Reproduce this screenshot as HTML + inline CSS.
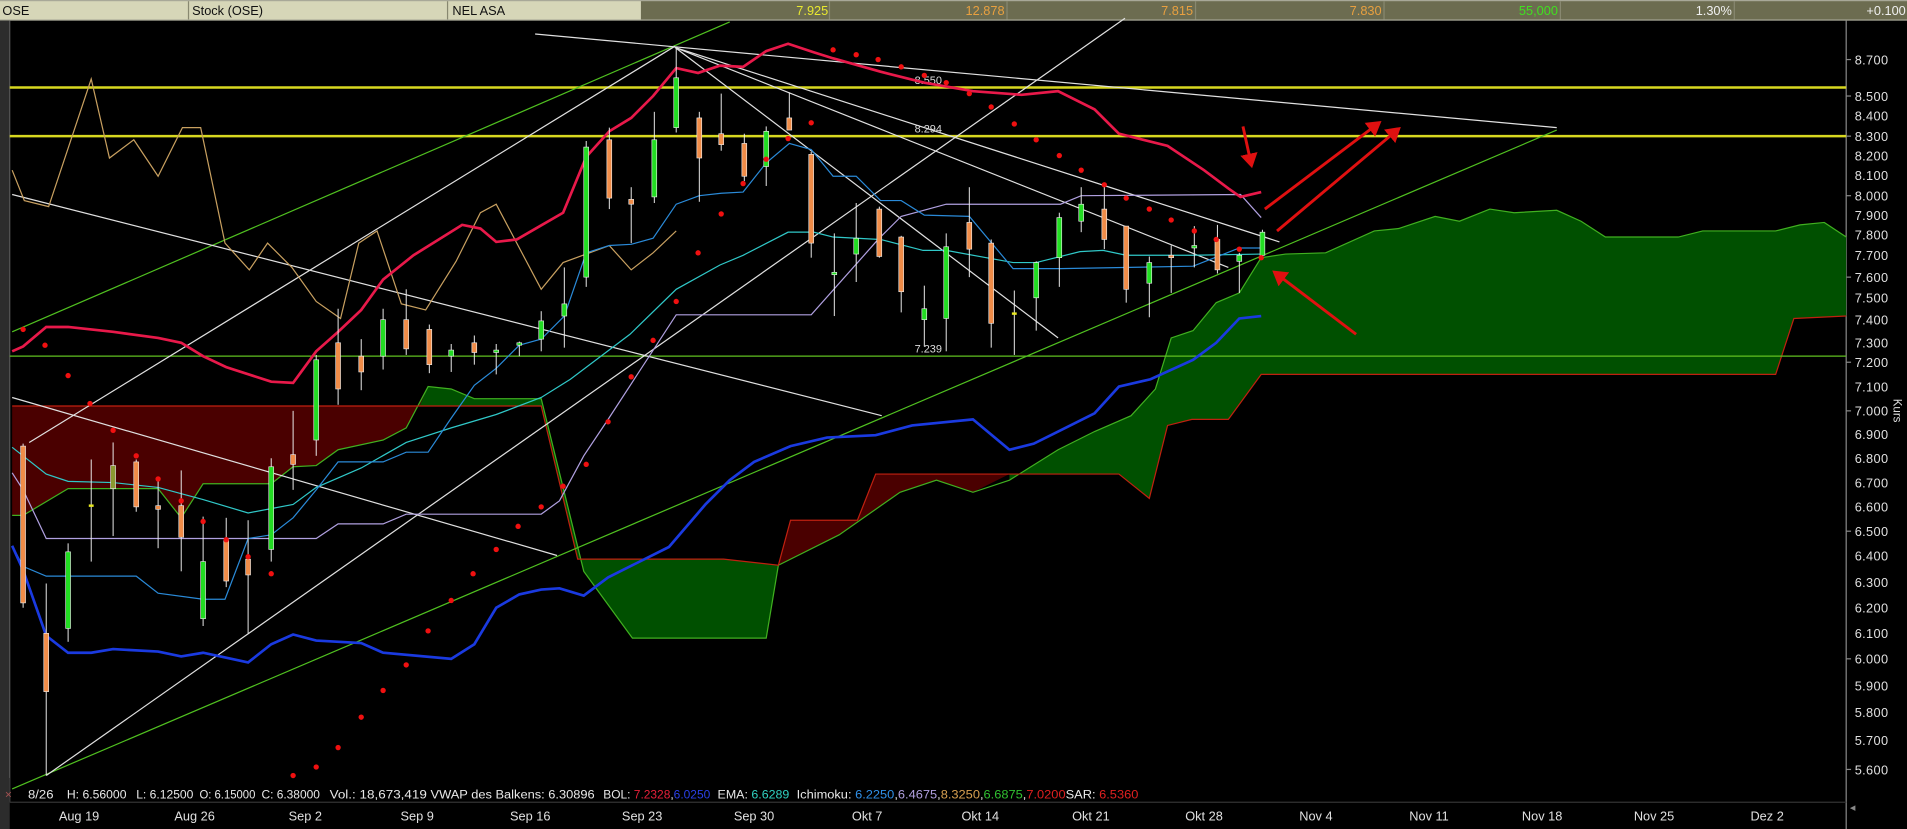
<!DOCTYPE html>
<html><head><meta charset="utf-8"><style>
html,body{margin:0;padding:0;background:#000;overflow:hidden}
svg{display:block}
text{font-family:"Liberation Sans",Arial,sans-serif}
</style></head><body>
<svg width="1907" height="829" viewBox="0 0 1568 682" preserveAspectRatio="none" xmlns="http://www.w3.org/2000/svg">
<defs>
<marker id="ah" markerWidth="6" markerHeight="6" refX="4" refY="3" orient="auto" markerUnits="strokeWidth"><path d="M0,0 L5,3 L0,6 z" fill="#e01010"/></marker>
</defs>
<rect width="1568" height="682" fill="#000"/>
<rect x="0" y="0" width="1568" height="17" fill="#a8a898"/>
<rect x="0" y="1" width="527" height="15" fill="#d6d6b8"/>
<rect x="527" y="1" width="1041" height="15" fill="#6c6c50"/>
<g stroke="#888870" stroke-width="1"><line x1="155" y1="1" x2="155" y2="16"/><line x1="368" y1="1" x2="368" y2="16"/><line x1="682" y1="1" x2="682" y2="16"/><line x1="828" y1="1" x2="828" y2="16"/><line x1="983" y1="1" x2="983" y2="16"/><line x1="1138" y1="1" x2="1138" y2="16"/><line x1="1283" y1="1" x2="1283" y2="16"/><line x1="1426" y1="1" x2="1426" y2="16"/></g>
<g font-size="10.5" fill="#111"><text x="2" y="12.5">OSE</text><text x="158" y="12.5">Stock (OSE)</text><text x="372" y="12.5">NEL ASA</text></g>
<g font-size="10.5" text-anchor="end">
<text x="681" y="12.5" fill="#e8e830">7.925</text>
<text x="826" y="12.5" fill="#e8a040">12.878</text>
<text x="981" y="12.5" fill="#e8a040">7.815</text>
<text x="1136" y="12.5" fill="#e8a040">7.830</text>
<text x="1281" y="12.5" fill="#40e020">55,000</text>
<text x="1424" y="12.5" fill="#f0f0f0">1.30%</text>
<text x="1567" y="12.5" fill="#f0f0f0">+0.100</text>
</g>
<rect x="0" y="17" width="8" height="665" fill="#2c2c2c"/>
<line x1="8" y1="17" x2="8" y2="660" stroke="#555" stroke-width="1"/>
<line x1="1518" y1="17" x2="1518" y2="682" stroke="#888" stroke-width="1"/>
<line x1="8" y1="660" x2="1518" y2="660" stroke="#333" stroke-width="1"/>
<g font-size="10.5" fill="#e0e0e0" letter-spacing="0.3">
<text x="1525" y="53">8.700</text><text x="1525" y="83">8.500</text><text x="1525" y="99">8.400</text><text x="1525" y="116">8.300</text><text x="1525" y="132">8.200</text><text x="1525" y="148">8.100</text><text x="1525" y="165">8.000</text><text x="1525" y="181">7.900</text><text x="1525" y="197">7.800</text><text x="1525" y="214">7.700</text><text x="1525" y="232">7.600</text><text x="1525" y="249">7.500</text><text x="1525" y="267">7.400</text><text x="1525" y="286">7.300</text><text x="1525" y="302">7.200</text><text x="1525" y="322">7.100</text><text x="1525" y="342">7.000</text><text x="1525" y="361">6.900</text><text x="1525" y="381">6.800</text><text x="1525" y="401">6.700</text><text x="1525" y="421">6.600</text><text x="1525" y="441">6.500</text><text x="1525" y="461">6.400</text><text x="1525" y="483">6.300</text><text x="1525" y="504">6.200</text><text x="1525" y="525">6.100</text><text x="1525" y="546">6.000</text><text x="1525" y="568">5.900</text><text x="1525" y="590">5.800</text><text x="1525" y="613">5.700</text><text x="1525" y="637">5.600</text>
</g>
<g stroke="#888" stroke-width="1"><line x1="1518" y1="49" x2="1522" y2="49"/><line x1="1518" y1="79" x2="1522" y2="79"/><line x1="1518" y1="112" x2="1522" y2="112"/><line x1="1518" y1="161" x2="1522" y2="161"/><line x1="1518" y1="228" x2="1522" y2="228"/><line x1="1518" y1="298" x2="1522" y2="298"/><line x1="1518" y1="338" x2="1522" y2="338"/><line x1="1518" y1="437" x2="1522" y2="437"/><line x1="1518" y1="542" x2="1522" y2="542"/><line x1="1518" y1="633" x2="1522" y2="633"/></g>
<text x="1557" y="328" font-size="9.5" fill="#ddd" transform="rotate(90 1557 328)">Kurs</text>

<polygon fill="#4a0000" points="10,334 445,334 445,328 390,328 371,320 352,318 334,352 315,362 278,370 260,383 241,384 223,398 167,398 149,426 130,402 56,402 19,424 10,424"/>
<polygon fill="#005000" points="352,318 371,320 390,328 445,328 480,470 520,525 630,525 640,465 595,460 515,460 475,460 445,334 345,334"/>
<polygon fill="#4a0000" points="640,465 650,428 705,428 720,390 830,390 800,405 770,395 740,405 690,440"/>
<polygon fill="#005000" points="830,395 870,370 900,355 930,342 950,320 963,278 981,272 1000,249 1019,241 1037,212 1057,209 1090,208 1130,190 1150,188 1180,178 1200,182 1225,172 1245,175 1280,173 1300,182 1320,195 1380,195 1400,190 1460,190 1480,185 1500,183 1518,195 1518,260 1475,262 1460,308 1037,308 1010,345 980,345 960,350 945,410 920,390 830,390"/>
<polyline fill="none" stroke="#40b020" stroke-width="1" points="10,424 19,424 56,402 130,402 149,426 167,398 223,398 241,384 260,383 278,370 315,362 334,352 352,318 371,320 390,328 445,328 480,470 520,525 630,525 640,465 690,440 740,405 770,395 800,405 830,395 870,370 900,355 930,342 950,320 963,278 981,272 1000,249 1019,241 1037,212 1057,209 1090,208 1130,190 1150,188 1180,178 1200,182 1225,172 1245,175 1280,173 1300,182 1320,195 1380,195 1400,190 1460,190 1480,185 1500,183 1518,195"/>
<polyline fill="none" stroke="#c02010" stroke-width="1" points="10,334 445,334 475,460 595,460 640,465 650,428 705,428 720,390 920,390 945,410 960,350 980,345 1010,345 1037,308 1460,308 1475,262 1518,260"/>

<line x1="8" y1="72" x2="1518" y2="72" stroke="#d8d820" stroke-width="2"/>
<line x1="8" y1="112" x2="1518" y2="112" stroke="#d8d820" stroke-width="2"/>
<line x1="8" y1="293" x2="1518" y2="293" stroke="#60c020" stroke-width="1"/>
<g font-size="9" fill="#ddd"><text x="752" y="69">8.550</text><text x="752" y="109">8.294</text><text x="752" y="290">7.239</text></g>

<g fill="none" stroke-width="1">
<line x1="10" y1="273" x2="600" y2="18" stroke="#50c020"/>
<line x1="10" y1="649" x2="1280" y2="107" stroke="#50c020"/>
<line x1="38" y1="638" x2="925" y2="15" stroke="#e0e0e0"/>
<line x1="24" y1="364" x2="555" y2="38" stroke="#e0e0e0"/>
<line x1="10" y1="160" x2="725" y2="342" stroke="#e0e0e0"/>
<line x1="10" y1="327" x2="458" y2="457" stroke="#e0e0e0"/>
<line x1="440" y1="28" x2="1280" y2="105" stroke="#e0e0e0"/>
<line x1="555" y1="39" x2="870" y2="278" stroke="#e0e0e0"/>
<line x1="555" y1="39" x2="1010" y2="220" stroke="#e0e0e0"/>
<line x1="555" y1="39" x2="1052" y2="199" stroke="#e0e0e0"/>
</g>

<polyline fill="none" stroke="#c8a060" stroke-width="1" points="10,140 20,165 40,170 75,65 90,130 110,115 130,145 150,105 165,105 185,200 205,222 220,200 240,220 260,248 280,262 295,200 310,190 330,250 350,255 375,215 395,175 408,168 445,238 463,216 501,202 519,222 537,208 556,190"/>
<polyline fill="none" stroke="#b0a0e0" stroke-width="1" points="10,389 19,403 38,443 260,443 278,431 315,431 334,423 445,423 460,412 480,375 500,345 556,259 667,259 722,197 741,178 778,168 872,168 889,161 1020,160 1037,179"/>
<polyline fill="none" stroke="#30c8c8" stroke-width="1" points="10,368 38,390 56,396 93,397 130,401 167,411 204,422 241,415 260,401 297,385 334,364 371,352 408,341 445,327 469,312 518,275 556,238 592,218 611,210 648,191 669,191 685,195 724,197 759,206 778,206 833,216 852,216 888,207 907,206 926,210 981,210 1037,209"/>
<polyline fill="none" stroke="#2a8ad8" stroke-width="1" points="10,449 19,466 38,474 112,474 130,488 167,493 185,493 204,443 223,440 241,426 260,403 278,380 315,380 334,372 352,372 371,344 390,317 408,303 427,284 445,279 464,260 482,208 501,202 519,201 537,196 556,168 575,161 593,159 611,158 630,134 649,118 667,123 685,145 704,145 724,165 741,165 760,177 797,178 833,221 872,221 981,219 1019,204 1037,204"/>
<polyline fill="none" stroke="#e8194a" stroke-width="2.2" points="10,289 19,285 38,269 56,269 93,273 130,278 149,282 167,293 186,302 223,314 241,315 260,289 278,273 297,255 315,230 340,210 380,185 395,188 408,199 425,197 444,186 463,175 482,129 501,108 519,97 537,79 556,56 574,60 592,54 611,55 630,42 648,36 669,43 685,48 724,59 760,68 800,75 840,78 870,75 900,90 920,110 960,120 990,140 1010,155 1020,162 1037,158"/>
<polyline fill="none" stroke="#1a3ae0" stroke-width="2.2" points="10,449 19,469 38,523 56,537 75,537 93,534 130,536 149,540 167,537 204,545 223,530 241,522 260,527 297,529 315,537 371,542 390,530 408,500 427,489 445,485 460,484 480,490 500,475 520,465 550,450 580,415 600,395 620,380 650,367 680,360 720,358 750,350 800,345 830,370 850,365 870,355 900,340 920,318 946,312 981,296 1000,282 1019,262 1037,260"/>

<g stroke="#eee" stroke-width="0.8">
<line x1="19" y1="365" x2="19" y2="500"/><line x1="38" y1="480" x2="38" y2="638"/><line x1="56" y1="447" x2="56" y2="528"/><line x1="75" y1="378" x2="75" y2="462"/><line x1="93" y1="364" x2="93" y2="441"/><line x1="112" y1="378" x2="112" y2="421"/><line x1="130" y1="396" x2="130" y2="451"/><line x1="149" y1="387" x2="149" y2="470"/><line x1="167" y1="425" x2="167" y2="515"/><line x1="186" y1="426" x2="186" y2="483"/><line x1="204" y1="428" x2="204" y2="521"/><line x1="223" y1="377" x2="223" y2="462"/><line x1="241" y1="338" x2="241" y2="403"/><line x1="260" y1="292" x2="260" y2="375"/><line x1="278" y1="254" x2="278" y2="333"/><line x1="297" y1="279" x2="297" y2="321"/><line x1="315" y1="254" x2="315" y2="304"/><line x1="334" y1="238" x2="334" y2="292"/><line x1="353" y1="267" x2="353" y2="307"/><line x1="371" y1="283" x2="371" y2="306"/><line x1="390" y1="276" x2="390" y2="300"/><line x1="408" y1="283" x2="408" y2="308"/><line x1="427" y1="281" x2="427" y2="293"/><line x1="445" y1="256" x2="445" y2="289"/><line x1="464" y1="220" x2="464" y2="286"/><line x1="482" y1="116" x2="482" y2="236"/><line x1="501" y1="105" x2="501" y2="172"/><line x1="519" y1="154" x2="519" y2="200"/><line x1="538" y1="92" x2="538" y2="167"/><line x1="556" y1="40" x2="556" y2="109"/><line x1="575" y1="92" x2="575" y2="166"/><line x1="593" y1="77" x2="593" y2="124"/><line x1="612" y1="110" x2="612" y2="149"/><line x1="630" y1="104" x2="630" y2="153"/><line x1="649" y1="76" x2="649" y2="107"/><line x1="667" y1="125" x2="667" y2="212"/><line x1="686" y1="192" x2="686" y2="260"/><line x1="704" y1="167" x2="704" y2="232"/><line x1="723" y1="170" x2="723" y2="212"/><line x1="741" y1="194" x2="741" y2="257"/><line x1="760" y1="235" x2="760" y2="285"/><line x1="778" y1="192" x2="778" y2="289"/><line x1="797" y1="154" x2="797" y2="228"/><line x1="815" y1="197" x2="815" y2="286"/><line x1="834" y1="239" x2="834" y2="292"/><line x1="852" y1="215" x2="852" y2="272"/><line x1="871" y1="175" x2="871" y2="236"/><line x1="889" y1="154" x2="889" y2="191"/><line x1="908" y1="151" x2="908" y2="205"/><line x1="926" y1="186" x2="926" y2="249"/><line x1="945" y1="211" x2="945" y2="261"/><line x1="963" y1="202" x2="963" y2="241"/><line x1="982" y1="186" x2="982" y2="220"/><line x1="1001" y1="185" x2="1001" y2="225"/><line x1="1019" y1="208" x2="1019" y2="241"/><line x1="1038" y1="189" x2="1038" y2="211"/>
</g>
<g stroke="#f0f0f0" stroke-width="0.5">
<g fill="#f08c48">
<rect x="17" y="367" width="4" height="129"/><rect x="36" y="521" width="4" height="48"/><rect x="110" y="380" width="4" height="37"/><rect x="128" y="416" width="4" height="3"/><rect x="147" y="416" width="4" height="26"/><rect x="184" y="444" width="4" height="34"/><rect x="202" y="460" width="4" height="13"/><rect x="239" y="374" width="4" height="8"/><rect x="276" y="282" width="4" height="38"/><rect x="295" y="293" width="4" height="13"/><rect x="332" y="263" width="4" height="24"/><rect x="351" y="271" width="4" height="29"/><rect x="388" y="282" width="4" height="8"/><rect x="499" y="115" width="4" height="48"/><rect x="517" y="164" width="4" height="4"/><rect x="573" y="97" width="4" height="33"/><rect x="591" y="110" width="4" height="9"/><rect x="610" y="118" width="4" height="27"/><rect x="647" y="97" width="4" height="10"/><rect x="665" y="127" width="4" height="73"/><rect x="721" y="172" width="4" height="39"/><rect x="739" y="195" width="4" height="45"/><rect x="795" y="183" width="4" height="22"/><rect x="813" y="200" width="4" height="66"/><rect x="906" y="172" width="4" height="25"/><rect x="924" y="186" width="4" height="52"/><rect x="961" y="210" width="4" height="2"/><rect x="999" y="197" width="4" height="25"/>
</g>
<g fill="#22dd22">
<rect x="54" y="454" width="4" height="63"/><rect x="165" y="462" width="4" height="47"/><rect x="221" y="384" width="4" height="68"/><rect x="258" y="296" width="4" height="66"/><rect x="313" y="263" width="4" height="30"/><rect x="369" y="288" width="4" height="5"/><rect x="406" y="288" width="4" height="2"/><rect x="425" y="282" width="4" height="2"/><rect x="443" y="264" width="4" height="15"/><rect x="462" y="250" width="4" height="10"/><rect x="480" y="121" width="4" height="107"/><rect x="536" y="115" width="4" height="47"/><rect x="554" y="64" width="4" height="41"/><rect x="628" y="108" width="4" height="29"/><rect x="684" y="224" width="4" height="2"/><rect x="702" y="196" width="4" height="13"/><rect x="758" y="254" width="4" height="9"/><rect x="776" y="203" width="4" height="59"/><rect x="850" y="216" width="4" height="29"/><rect x="869" y="179" width="4" height="33"/><rect x="887" y="168" width="4" height="14"/><rect x="943" y="216" width="4" height="17"/><rect x="980" y="202" width="4" height="2"/><rect x="1017" y="210" width="4" height="5"/><rect x="1036" y="191" width="4" height="19"/>
</g>
<rect x="91" y="383" width="4" height="19" fill="#8a9a30"/>
</g>
<rect x="73" y="415" width="4" height="2" fill="#e8e820"/><rect x="832" y="257" width="4" height="2" fill="#e8e820"/>

<g fill="#f01010">
<circle cx="19" cy="271" r="2.2"/><circle cx="37" cy="284" r="2.2"/><circle cx="56" cy="309" r="2.2"/><circle cx="74" cy="332" r="2.2"/><circle cx="93" cy="354" r="2.2"/><circle cx="112" cy="375" r="2.2"/><circle cx="130" cy="394" r="2.2"/><circle cx="149" cy="412" r="2.2"/><circle cx="167" cy="429" r="2.2"/><circle cx="186" cy="444" r="2.2"/><circle cx="204" cy="458" r="2.2"/><circle cx="223" cy="472" r="2.2"/><circle cx="241" cy="638" r="2.2"/><circle cx="260" cy="631" r="2.2"/><circle cx="278" cy="615" r="2.2"/><circle cx="297" cy="590" r="2.2"/><circle cx="315" cy="568" r="2.2"/><circle cx="334" cy="547" r="2.2"/><circle cx="352" cy="519" r="2.2"/><circle cx="371" cy="494" r="2.2"/><circle cx="389" cy="472" r="2.2"/><circle cx="408" cy="452" r="2.2"/><circle cx="426" cy="433" r="2.2"/><circle cx="445" cy="417" r="2.2"/><circle cx="463" cy="400" r="2.2"/><circle cx="482" cy="382" r="2.2"/><circle cx="500" cy="347" r="2.2"/><circle cx="519" cy="310" r="2.2"/><circle cx="537" cy="280" r="2.2"/><circle cx="556" cy="248" r="2.2"/><circle cx="574" cy="208" r="2.2"/><circle cx="593" cy="176" r="2.2"/><circle cx="611" cy="151" r="2.2"/><circle cx="630" cy="131" r="2.2"/><circle cx="648" cy="114" r="2.2"/><circle cx="667" cy="101" r="2.2"/><circle cx="685" cy="41" r="2.2"/><circle cx="704" cy="45" r="2.2"/><circle cx="722" cy="49" r="2.2"/><circle cx="741" cy="55" r="2.2"/><circle cx="760" cy="62" r="2.2"/><circle cx="778" cy="68" r="2.2"/><circle cx="797" cy="77" r="2.2"/><circle cx="815" cy="88" r="2.2"/><circle cx="834" cy="102" r="2.2"/><circle cx="852" cy="115" r="2.2"/><circle cx="871" cy="128" r="2.2"/><circle cx="889" cy="140" r="2.2"/><circle cx="908" cy="152" r="2.2"/><circle cx="926" cy="163" r="2.2"/><circle cx="945" cy="172" r="2.2"/><circle cx="963" cy="181" r="2.2"/><circle cx="982" cy="190" r="2.2"/><circle cx="1000" cy="197" r="2.2"/><circle cx="1019" cy="205" r="2.2"/><circle cx="1037" cy="212" r="2.2"/>
</g>

<g stroke="#e01010" stroke-width="2.4" fill="none" marker-end="url(#ah)">
<line x1="1022" y1="104" x2="1029" y2="136"/>
<line x1="1040" y1="172" x2="1134" y2="101"/>
<line x1="1050" y1="190" x2="1150" y2="106"/>
<line x1="1115" y1="275" x2="1048" y2="224"/>
</g>

<rect x="0" y="640" width="8" height="20" fill="#2c2c2c"/>
<g font-size="10" fill="#e8e8e8" lengthAdjust="spacingAndGlyphs">
<text x="4" y="657" fill="#a05050">×</text>
<text x="23" y="657" textLength="21" lengthAdjust="spacingAndGlyphs">8/26</text>
<text x="55" y="657" textLength="49" lengthAdjust="spacingAndGlyphs">H: 6.56000</text>
<text x="112" y="657" textLength="47" lengthAdjust="spacingAndGlyphs">L: 6.12500</text>
<text x="164" y="657" textLength="46" lengthAdjust="spacingAndGlyphs">O: 6.15000</text>
<text x="215" y="657" textLength="48" lengthAdjust="spacingAndGlyphs">C: 6.38000</text>
<text x="271" y="657" textLength="80" lengthAdjust="spacingAndGlyphs">Vol.: 18,673,419</text>
<text x="354" y="657" textLength="135" lengthAdjust="spacingAndGlyphs">VWAP des Balkens: 6.30896</text>
<text x="496" y="657" textLength="88" lengthAdjust="spacingAndGlyphs">BOL: <tspan fill="#e8203a">7.2328</tspan>,<tspan fill="#2a40e8">6.0250</tspan></text>
<text x="590" y="657" textLength="59" lengthAdjust="spacingAndGlyphs">EMA: <tspan fill="#30d0c0">6.6289</tspan></text>
<text x="655" y="657" textLength="281" lengthAdjust="spacingAndGlyphs">Ichimoku: <tspan fill="#3090e8">6.2250</tspan>,<tspan fill="#b0a0e0">6.4675</tspan>,<tspan fill="#d8a050">8.3250</tspan>,<tspan fill="#30c030">6.6875</tspan>,<tspan fill="#e02020">7.0200</tspan>SAR: <tspan fill="#e02020">6.5360</tspan></text>
</g>
<g font-size="10.5" fill="#e0e0e0" text-anchor="middle">
<text x="65" y="675">Aug 19</text><text x="160" y="675">Aug 26</text><text x="251" y="675">Sep 2</text><text x="343" y="675">Sep 9</text><text x="436" y="675">Sep 16</text><text x="528" y="675">Sep 23</text><text x="620" y="675">Sep 30</text><text x="713" y="675">Okt 7</text><text x="806" y="675">Okt 14</text><text x="897" y="675">Okt 21</text><text x="990" y="675">Okt 28</text><text x="1082" y="675">Nov 4</text><text x="1175" y="675">Nov 11</text><text x="1268" y="675">Nov 18</text><text x="1360" y="675">Nov 25</text><text x="1453" y="675">Dez 2</text>
</g>
<text x="1521" y="667" font-size="9" fill="#888">◂</text>
</svg>
</body></html>
